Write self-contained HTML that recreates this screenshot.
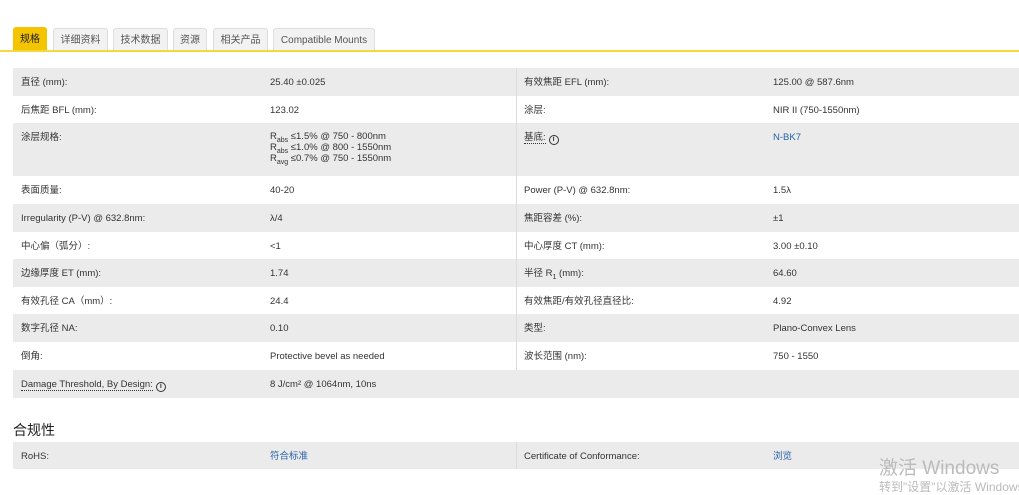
<!DOCTYPE html>
<html><head><meta charset="utf-8"><style>
body{margin:0;width:1019px;height:490px;background:#fff;font-family:"Liberation Sans","Noto Sans CJK SC",sans-serif;color:#333;font-size:9.5px;overflow:hidden;position:relative}
.tabs{position:absolute;top:28px;left:13px;height:23px}
.tab{position:absolute;top:0;height:22px;line-height:23px;background:#f2f2f2;border:1px solid #ddd;border-bottom:none;border-radius:3px 3px 0 0;color:#555;font-size:10px;text-align:center;box-sizing:border-box}
.tab.a{background:#f5c400;border-color:#f5c400;color:#222;top:-1px;height:23px}
.yl{position:absolute;top:50px;left:0;width:1019px;height:2px;background:#f5d840}
.row{position:absolute;left:13px;width:1006px;height:28px}
.g{background:#ebebeb}
.row>span{position:absolute;top:9px;white-space:nowrap;line-height:12px}
.row .div{position:absolute;left:503px;top:0;bottom:0;width:1px;background:#dcdcdc}
a{color:#2862a8;text-decoration:none}
u{text-decoration:none;border-bottom:1px dotted #333}
b.i{display:inline-block;width:8px;height:8px;border:1.2px solid #333;border-radius:50%;font-size:7px;line-height:8px;text-align:center;font-weight:bold;vertical-align:-1px;margin-left:3px}
sub{font-size:7px;line-height:0}
</style></head><body>
<div class="tabs">
<div class="tab a" style="left:0;width:34px">规格</div>
<div class="tab" style="left:40px;width:55px">详细资料</div>
<div class="tab" style="left:100px;width:55px">技术数据</div>
<div class="tab" style="left:160px;width:34px">资源</div>
<div class="tab" style="left:200px;width:55px">相关产品</div>
<div class="tab" style="left:260px;width:102px">Compatible Mounts</div>
</div>
<div class="yl"></div>

<div class="row g" style="top:68px"><span style="left:8px">直径 (mm):</span><span style="left:257px">25.40 ±0.025</span><div class="div"></div><span style="left:511px">有效焦距 EFL (mm):</span><span style="left:760px">125.00 @ 587.6nm</span></div>
<div class="row" style="top:96px;height:27px"><span style="left:8px">后焦距 BFL (mm):</span><span style="left:257px">123.02</span><div class="div"></div><span style="left:511px">涂层:</span><span style="left:760px">NIR II (750-1550nm)</span></div>
<div class="row g" style="top:123px;height:53px"><span style="left:8px">涂层规格:</span><span style="left:257px;line-height:11px;top:8px">R<sub>abs</sub> ≤1.5% @ 750 - 800nm<br>R<sub>abs</sub> ≤1.0% @ 800 - 1550nm<br>R<sub>avg</sub> ≤0.7% @ 750 - 1550nm</span><div class="div"></div><span style="left:511px"><u>基底:</u><b class="i">i</b></span><span style="left:760px"><a>N-BK7</a></span></div>
<div class="row" style="top:176px"><span style="left:8px">表面质量:</span><span style="left:257px">40-20</span><div class="div"></div><span style="left:511px">Power (P-V) @ 632.8nm:</span><span style="left:760px">1.5λ</span></div>
<div class="row g" style="top:204px"><span style="left:8px">Irregularity (P-V) @ 632.8nm:</span><span style="left:257px">λ/4</span><div class="div"></div><span style="left:511px">焦距容差 (%):</span><span style="left:760px">±1</span></div>
<div class="row" style="top:232px;height:27px"><span style="left:8px">中心偏（弧分）:</span><span style="left:257px">&lt;1</span><div class="div"></div><span style="left:511px">中心厚度 CT (mm):</span><span style="left:760px">3.00 ±0.10</span></div>
<div class="row g" style="top:259px"><span style="left:8px">边缘厚度 ET (mm):</span><span style="left:257px">1.74</span><div class="div"></div><span style="left:511px">半径 R<sub>1</sub> (mm):</span><span style="left:760px">64.60</span></div>
<div class="row" style="top:287px;height:27px"><span style="left:8px">有效孔径 CA（mm）:</span><span style="left:257px">24.4</span><div class="div"></div><span style="left:511px">有效焦距/有效孔径直径比:</span><span style="left:760px">4.92</span></div>
<div class="row g" style="top:314px"><span style="left:8px">数字孔径 NA:</span><span style="left:257px">0.10</span><div class="div"></div><span style="left:511px">类型:</span><span style="left:760px">Plano-Convex Lens</span></div>
<div class="row" style="top:342px"><span style="left:8px">倒角:</span><span style="left:257px">Protective bevel as needed</span><div class="div"></div><span style="left:511px">波长范围 (nm):</span><span style="left:760px">750 - 1550</span></div>
<div class="row g" style="top:370px"><span style="left:8px"><u>Damage Threshold, By Design:</u><b class="i">i</b></span><span style="left:257px">8 J/cm² @ 1064nm, 10ns</span></div>

<div style="position:absolute;left:13px;top:420px;font-size:14px;color:#222">合规性</div>
<div class="row g" style="top:442px;height:27px"><span style="left:8px">RoHS:</span><span style="left:257px"><a>符合标准</a></span><div class="div"></div><span style="left:511px">Certificate of Conformance:</span><span style="left:760px"><a>浏览</a></span></div>
<div style="position:absolute;left:879px;top:453px;font-size:19px;color:#bbb">激活 Windows</div>
<div style="position:absolute;left:879px;top:478px;font-size:12px;color:#bbb;white-space:nowrap">转到"设置"以激活 Windows</div>
</body></html>
